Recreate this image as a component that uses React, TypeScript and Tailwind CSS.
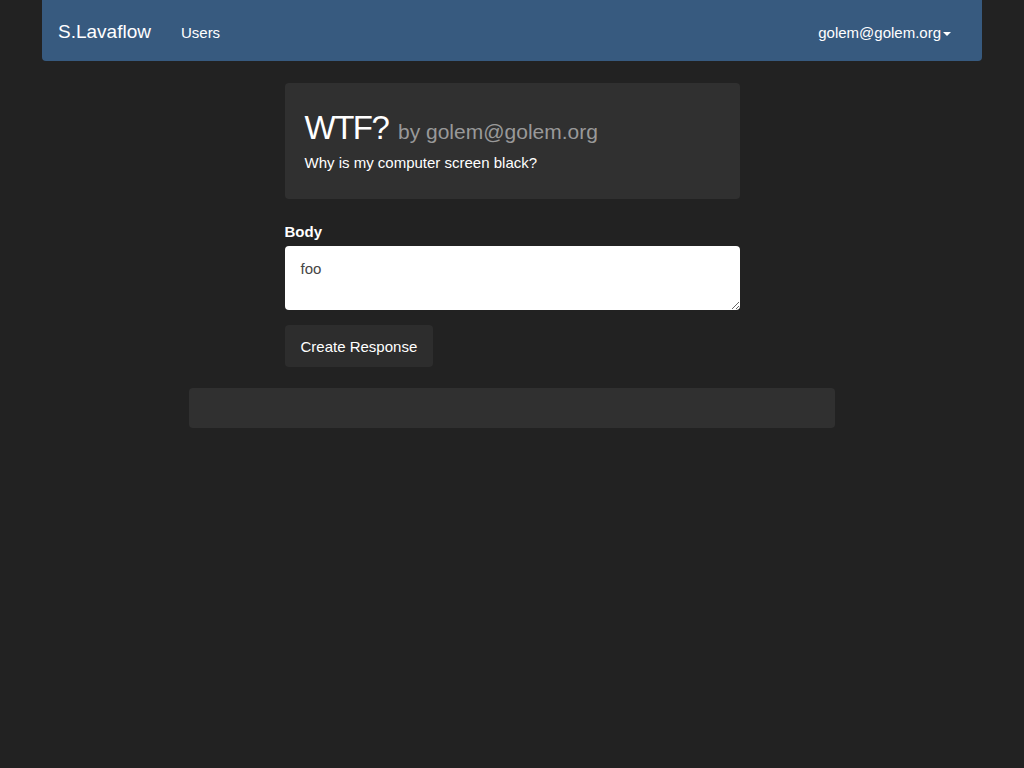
export default function App() {
  return (
    <div className="min-h-screen bg-[#222222] text-white" style={{ fontFamily: '"Liberation Sans", Arial, sans-serif' }}>
      <div className="mx-auto w-[940px]">
        <nav className="flex h-[61px] items-start justify-between rounded-b bg-[#375a7f] px-4">
          <div className="flex items-baseline pt-[22px]">
            <a className="text-[19px] leading-none">S.Lavaflow</a>
            <a className="ml-[30px] text-[15px] leading-none">Users</a>
          </div>
          <div className="mr-[15px] flex items-center pt-[25px] text-[15px] leading-none">
            golem@golem.org
            <span className="ml-[2px] mt-[2px] inline-block h-0 w-0 border-x-[4px] border-t-[4px] border-x-transparent border-t-white" />
          </div>
        </nav>
      </div>

      <div className="mx-auto mt-[22px] w-[455px]">
        <div className="h-[116px] rounded bg-[#303030] px-5 pt-[27px]">
          <h1 className="text-[33px] leading-[1.1] tracking-[-1.5px]">
            WTF?{' '}
            <span className="ml-[2px] text-[21px] tracking-normal text-[#999999]">by golem@golem.org</span>
          </h1>
          <p className="mt-[6px] text-[15px] leading-[1.4]">Why is my computer screen black?</p>
        </div>

        <form className="mt-[22px]">
          <label className="block text-[15px] font-bold leading-[1.4]">Body</label>
          <textarea
            className="mt-[4px] block h-[64px] w-full rounded bg-white px-4 pb-[10px] pt-[12px] text-[15px] leading-[1.4] text-[#464545] outline-none"
            defaultValue="foo"
          />
          <button
            type="button"
            className="mt-[15px] h-[42px] rounded bg-[#2d2d2d] px-4 text-[15px] leading-none text-white"
          >
            Create Response
          </button>
        </form>
      </div>

      <div className="mx-auto mt-[21px] h-[40px] w-[646px] rounded bg-[#303030]" />
    </div>
  );
}
